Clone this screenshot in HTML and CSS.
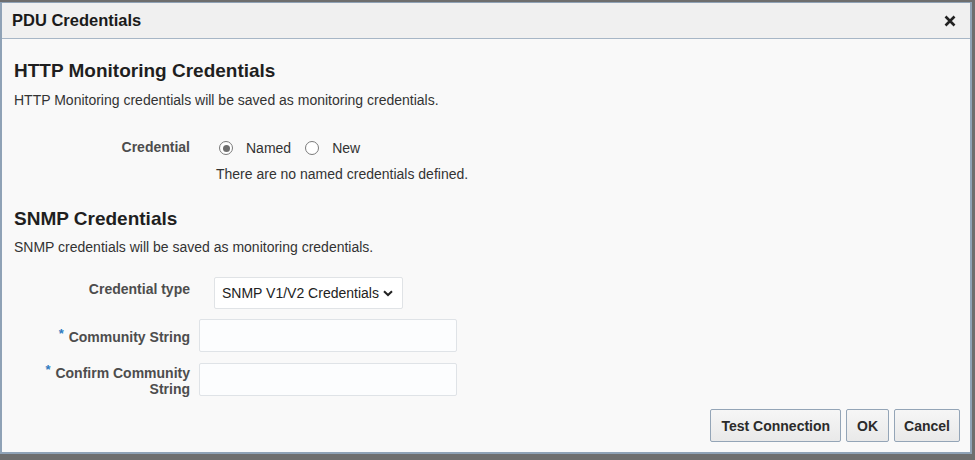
FILE: index.html
```html
<!DOCTYPE html>
<html>
<head>
<meta charset="utf-8">
<link rel="stylesheet" href="styles.css">
</head>
<body>
<div class="dialog">
  <div class="header">
    <span class="title">PDU Credentials</span>
    <span class="close">
      <svg width="12" height="12" viewBox="0 0 12 12"><path d="M1.5 1.5 L10.5 10.5 M10.5 1.5 L1.5 10.5" stroke="#222" stroke-width="2.6" stroke-linecap="butt"/></svg>
    </span>
  </div>
  <div class="body">
    <h2 class="section-title">HTTP Monitoring Credentials</h2>
    <p class="desc">HTTP Monitoring credentials will be saved as monitoring credentials.</p>
    <div class="row row-cred">
      <div class="label">Credential</div>
      <div class="field">
        <div class="radios">
          <span class="radio checked"></span><span class="radio-label">Named</span>
          <span class="radio"></span><span class="radio-label">New</span>
        </div>
        <div class="note">There are no named credentials defined.</div>
      </div>
    </div>
    <h2 class="section-title snmp">SNMP Credentials</h2>
    <p class="desc desc-snmp">SNMP credentials will be saved as monitoring credentials.</p>
    <div class="row row-type">
      <div class="label">Credential type</div>
      <div class="select">SNMP V1/V2 Credentials
        <svg width="10" height="7" viewBox="0 0 10 7"><path d="M1 1.2 L5 5 L9 1.2" stroke="#222" stroke-width="2" fill="none"/></svg>
      </div>
    </div>
    <div class="row row-input">
      <div class="label"><span class="req">*</span> Community String</div>
      <div class="input"></div>
    </div>
    <div class="row row-input">
      <div class="label"><span class="req">*</span> Confirm Community<br>String</div>
      <div class="input"></div>
    </div>
    <div class="buttons">
      <button class="btn btn-wide">Test Connection</button>
      <button class="btn btn-wide">OK</button>
      <button class="btn">Cancel</button>
    </div>
  </div>
</div>
</body>
</html>
```
FILE: styles.css
```css
html, body {
  margin: 0;
  padding: 0;
}
body {
  width: 975px;
  height: 460px;
  background: #6e6e6e;
  font-family: "Liberation Sans", Arial, sans-serif;
  overflow: hidden;
  padding-top: 2px;
  box-sizing: border-box;
}
.dialog {
  width: 972px;
  height: 452px;
  box-sizing: border-box;
  border: 2px solid #8fa2b6;
  border-top-width: 1px;
  background: #f9f9f9;
  display: flex;
  flex-direction: column;
}
.header {
  height: 35px;
  background: #f0f0f0;
  border-bottom: 1px solid #a7b6c6;
  display: flex;
  align-items: center;
  justify-content: space-between;
  padding: 0 14px 0 10px;
  flex: none;
}
.title {
  font-size: 16.5px;
  font-weight: bold;
  color: #1a1a1a;
}
.close {
  display: flex;
  margin-top: 1px;
}
.body {
  flex: 1;
  padding: 0 10px 0 12px;
  position: relative;
  color: #333;
  font-size: 14px;
}
.section-title {
  margin: 21px 0 0 0;
  font-size: 19px;
  font-weight: bold;
  color: #1f1f1f;
  line-height: 22px;
}
.section-title.snmp {
  margin-top: 26px;
}
.desc {
  margin: 10px 0 0 0;
  line-height: 16px;
  color: #333;
}
.desc-snmp {
  margin-top: 9px;
}
.row {
  display: flex;
}
.label {
  width: 176px;
  text-align: right;
  font-weight: bold;
  color: #4d4d4d;
  flex: none;
  line-height: 16px;
}
.req {
  color: #2f7bc0;
  font-size: 13px;
  vertical-align: 4px;
  margin-right: 1px;
}
.row-cred {
  margin-top: 31px;
}
.field {
  margin-left: 26px;
}
.radios {
  display: flex;
  align-items: center;
  height: 16px;
  margin-top: 1px;
}
.radio {
  width: 14px;
  height: 14px;
  border: 1px solid #7a7a7a;
  border-radius: 50%;
  box-sizing: border-box;
  background: #fff;
  margin-left: 3px;
  position: relative;
}
.radio.checked::after {
  content: "";
  position: absolute;
  left: 2.5px;
  top: 2.5px;
  width: 7px;
  height: 7px;
  border-radius: 50%;
  background: #6e6e6e;
}
.radio-label {
  margin-left: 13px;
  margin-right: 11px;
}
.radio-label:first-of-type {
  margin-right: 12px;
}
.note {
  margin-top: 10px;
  line-height: 16px;
}
.row-type {
  margin-top: 22px;
  align-items: flex-start;
}
.row-type .label {
  margin-top: 4px;
}
.select {
  margin-left: 24px;
  width: 189px;
  height: 32px;
  box-sizing: border-box;
  border: 1px solid #e0e3e6;
  border-radius: 2px;
  background: #fff;
  display: flex;
  align-items: center;
  padding-left: 7px;
  gap: 4px;
  color: #222;
  white-space: nowrap;
}
.row-input {
  margin-top: 10px;
  align-items: center;
}
.input {
  margin-left: 9px;
  width: 258px;
  height: 33px;
  box-sizing: border-box;
  border: 1px solid #dfe3e7;
  border-radius: 2px;
  background: #fcfdfe;
}
.buttons {
  position: absolute;
  right: 10px;
  bottom: 10px;
  display: flex;
  gap: 5px;
}
.btn {
  font-family: "Liberation Sans", Arial, sans-serif;
  font-size: 14px;
  font-weight: bold;
  color: #2b2b2b;
  height: 33px;
  padding: 0 9px;
  border: 1px solid #94a5b7;
  border-radius: 2px;
  background: linear-gradient(#f6f6f6, #e9e9e9);
}
.btn-wide {
  padding: 0 10px;
}
```
